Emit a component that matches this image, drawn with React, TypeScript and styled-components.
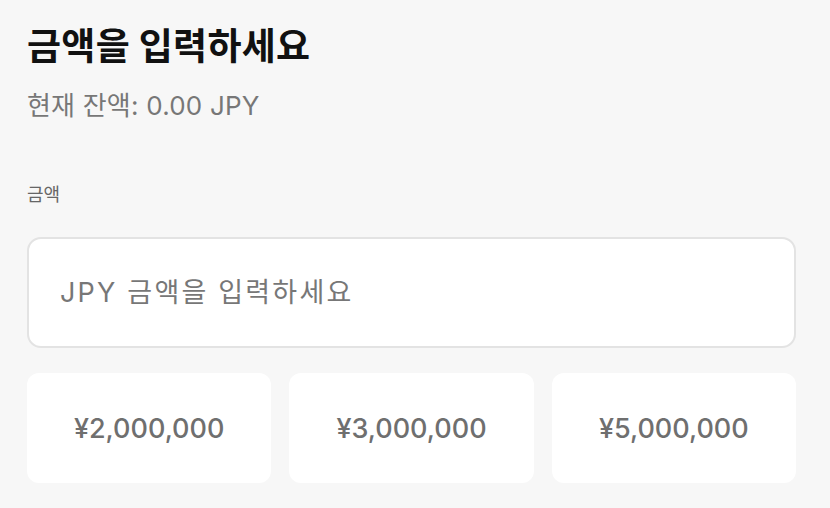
import React from "react";
import styled, { createGlobalStyle } from "styled-components";

const Global = createGlobalStyle`
  html, body { margin: 0; padding: 0; background: #f7f7f7; }
  body { font-family: "Inter", "Noto Sans CJK KR", sans-serif; }
`;

const Page = styled.div`
  width: 769px;
  padding: 19px 0 0 27px;
  display: flex;
  flex-direction: column;
`;

const Title = styled.h1`
  margin: 0;
  font-family: "Noto Sans CJK KR", sans-serif;
  font-size: 37px;
  font-weight: 700;
  letter-spacing: 0.3px;
  color: #111;
  line-height: 50px;
`;

const Balance = styled.p`
  margin: 20px 0 0;
  font-size: 26px;
  letter-spacing: 0.2px;
  color: #777;
  line-height: 34px;
  font-family: "Inter", "Noto Sans CJK KR", sans-serif;
`;

const Label = styled.label`
  margin-top: 58px;
  font-size: 18px;
  font-weight: 400;
  color: #666;
  font-family: "Noto Sans CJK KR", sans-serif;
  line-height: 25px;
`;

const Input = styled.input`
  margin-top: 31px;
  box-sizing: border-box;
  height: 111px;
  width: 100%;
  border: 2px solid #e3e3e3;
  border-radius: 14px;
  background: #fff;
  padding: 0 31px;
  font-size: 27px;
  letter-spacing: 2.2px;
  font-family: "Inter", "Noto Sans CJK KR", sans-serif;
  color: #333;
  outline: none;
  &::placeholder { color: #777; }
`;

const Presets = styled.div`
  margin-top: 25px;
  display: grid;
  grid-template-columns: repeat(3, 1fr);
  gap: 18px;
`;

const Preset = styled.button`
  height: 110px;
  border: none;
  border-radius: 12px;
  background: #fff;
  font-family: "Inter", sans-serif;
  font-size: 27px;
  font-weight: 500;
  color: #6f6f6f;
  cursor: pointer;
`;

export default function App() {
  const amounts = ["¥2,000,000", "¥3,000,000", "¥5,000,000"];
  return (
    <>
      <Global />
      <Page>
        <Title>금액을 입력하세요</Title>
        <Balance>현재 잔액: 0.00 JPY</Balance>
        <Label htmlFor="amt">금액</Label>
        <Input id="amt" placeholder="JPY 금액을 입력하세요" />
        <Presets>
          {amounts.map((a) => (
            <Preset key={a}>{a}</Preset>
          ))}
        </Presets>
      </Page>
    </>
  );
}
